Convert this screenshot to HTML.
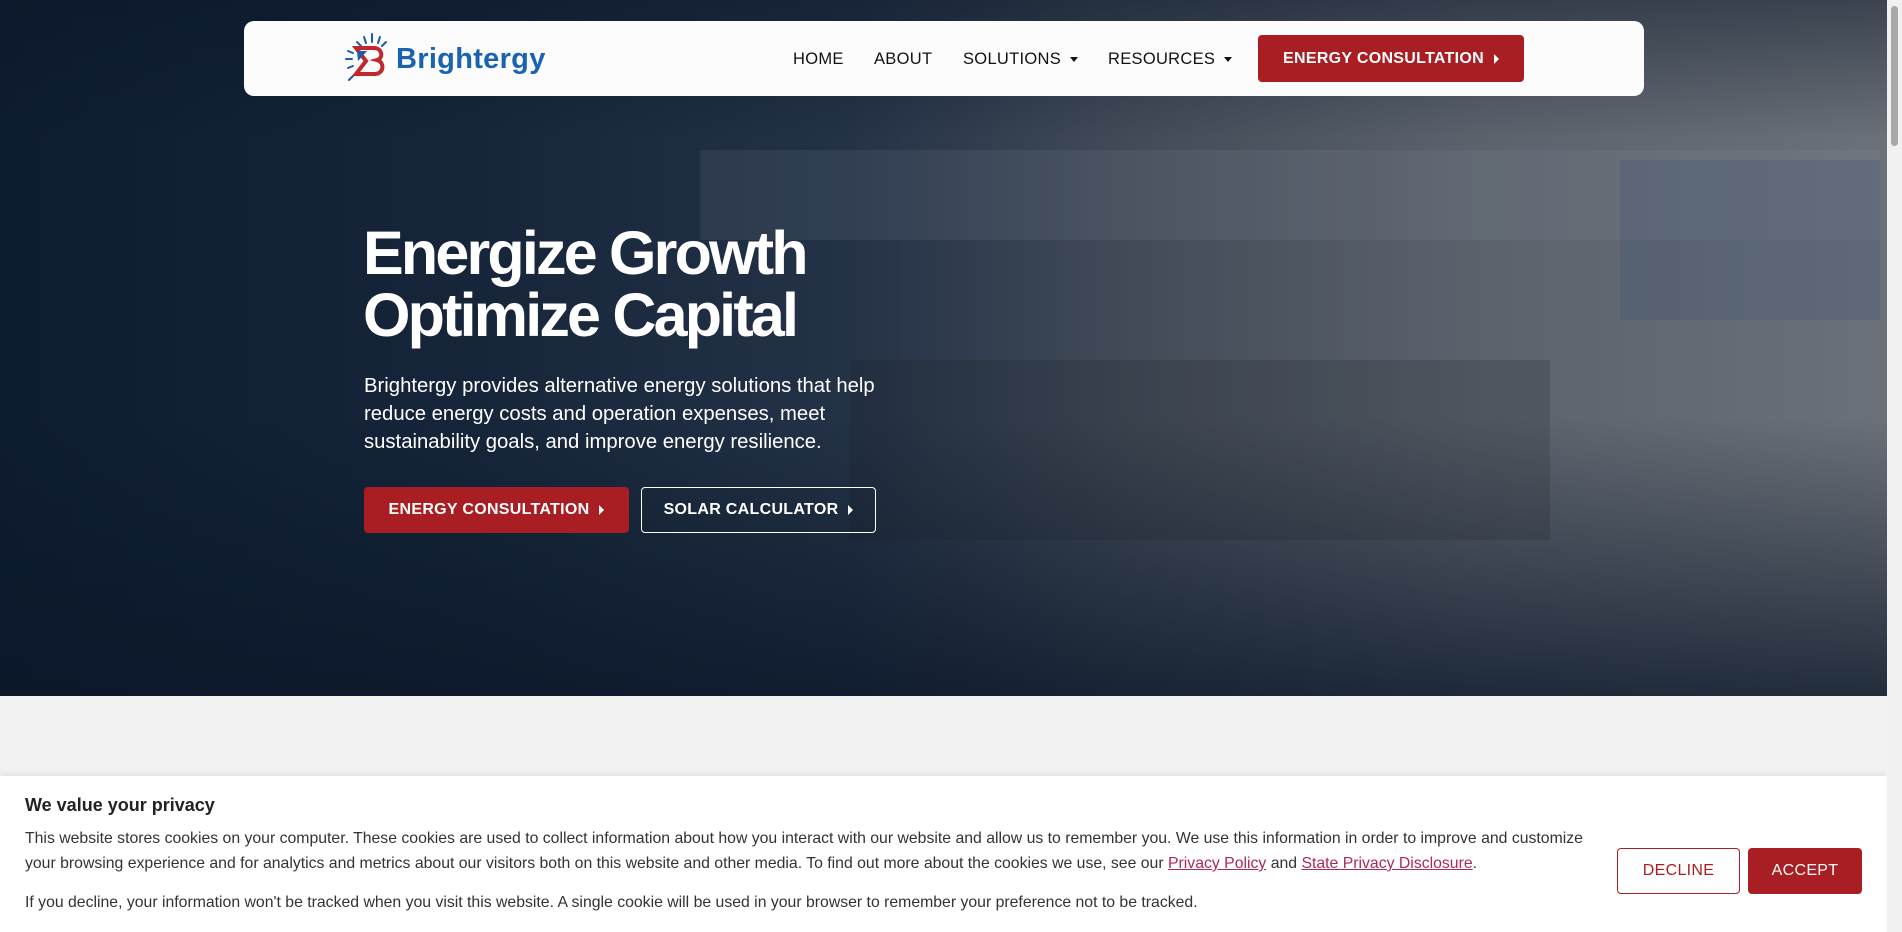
<!DOCTYPE html>
<html><head><meta charset="utf-8"><style>
*{margin:0;padding:0;box-sizing:border-box}
html,body{width:1902px;height:932px;overflow:hidden;font-family:"Liberation Sans",sans-serif;background:#f2f2f2}
.hero{position:absolute;left:0;top:0;width:1887px;height:696px;
background:
linear-gradient(180deg,rgba(10,22,40,0.5) 0%,rgba(10,22,40,0) 20%,rgba(10,22,40,0) 60%,rgba(10,22,40,0.75) 100%),
linear-gradient(90deg,#0e1c30 0%,#16253a 25%,#243247 45%,#424b58 60%,#5b626c 78%,#6b7178 100%);}
.roof{position:absolute}
.scroll{position:absolute;left:1887px;top:0;width:15px;height:932px;background:#f1f1f1}
.scroll div{position:absolute;left:4px;top:6px;width:7px;height:140px;background:#a8a8a8;border-radius:4px}
.nav{position:absolute;left:244px;top:21px;width:1400px;height:75px;background:#fcfcfc;border-radius:10px}
.nav a{position:absolute;top:29px;font-size:16.5px;color:#111;font-weight:500;letter-spacing:.3px}
.btn{position:absolute;background:#a91e23;color:#fff;font-weight:bold;display:flex;align-items:center;justify-content:center;border-radius:4px;letter-spacing:.3px}
.tri{display:inline-block;width:0;height:0;border-left:5px solid currentColor;border-top:5px solid transparent;border-bottom:5px solid transparent;margin-left:10px}
.dn{display:inline-block;width:0;height:0;border-top:5px solid #111;border-left:4.5px solid transparent;border-right:4.5px solid transparent;margin-left:9px;vertical-align:middle}
h1{position:absolute;left:363px;top:222px;color:#fff;font-size:61px;line-height:62px;letter-spacing:-2.8px;font-weight:bold}
.p{position:absolute;left:364px;top:372px;color:#fff;font-size:20.3px;line-height:28px;white-space:nowrap}
.cookie{position:absolute;left:0;top:776px;width:1887px;height:156px;background:#fff;box-shadow:0 -2px 6px rgba(0,0,0,.08)}
.cookie h2{position:absolute;left:25px;top:19px;font-size:18px;color:#222}
.cookie .t{position:absolute;left:25px;font-size:15.8px;color:#333;white-space:nowrap}
.cookie u{color:#b0285a}
</style></head><body>
<div class="hero">
<div class="roof" style="left:700px;top:150px;width:1180px;height:90px;background:rgba(150,160,170,0.12)"></div>
<div class="roof" style="left:1620px;top:160px;width:260px;height:160px;background:rgba(60,80,120,0.25)"></div>
<div class="roof" style="left:850px;top:360px;width:700px;height:180px;background:rgba(20,25,35,0.18)"></div>
</div>
<div class="nav">
<svg style="position:absolute;left:98px;top:10px" width="54" height="56" viewBox="0 0 54 56">
<g stroke="#1a5ea8" stroke-width="2" stroke-linecap="round">
<line x1="30" y1="3" x2="30" y2="11"/><line x1="22" y1="6" x2="24" y2="12"/><line x1="38" y1="6" x2="36" y2="12"/><line x1="15" y1="11" x2="19" y2="15"/><line x1="44" y1="11" x2="40" y2="15"/><line x1="4" y1="28" x2="10" y2="28"/><line x1="6" y1="20" x2="11" y2="22"/><line x1="6" y1="37" x2="11" y2="35"/><line x1="7" y1="49" x2="13" y2="43"/></g>
<path d="M14 17h18c8 0 10 10 3 12 8 2 7 14-2 14H14l10-13z" fill="none" stroke="#c1272d" stroke-width="4"/>
<path d="M15 20h10l-9 10z" fill="#1a5ea8"/>
</svg>
<div style="position:absolute;left:152px;top:22px;font-size:29px;color:#1a63b0;font-weight:bold;letter-spacing:.3px">Brightergy</div>
<a style="left:549px">HOME</a>
<a style="left:630px">ABOUT</a>
<a style="left:719px">SOLUTIONS<span class="dn"></span></a>
<a style="left:864px">RESOURCES<span class="dn"></span></a>
<div class="btn" style="left:1014px;top:14px;width:266px;height:47px;font-size:16px">ENERGY CONSULTATION<span class="tri"></span></div>
</div>
<h1>Energize Growth<br>Optimize Capital</h1>
<div class="p">Brightergy provides alternative energy solutions that help<br>reduce energy costs and operation expenses, meet<br>sustainability goals, and improve energy resilience.</div>
<div class="btn" style="left:364px;top:487px;width:265px;height:46px;font-size:16px">ENERGY CONSULTATION<span class="tri"></span></div>
<div class="btn" style="left:641px;top:487px;width:235px;height:46px;font-size:16px;background:transparent;border:1.5px solid #fff">SOLAR CALCULATOR<span class="tri"></span></div>
<div class="cookie">
<h2>We value your privacy</h2>
<div class="t" style="top:54px">This website stores cookies on your computer. These cookies are used to collect information about how you interact with our website and allow us to remember you. We use this information in order to improve and customize</div>
<div class="t" style="top:79px">your browsing experience and for analytics and metrics about our visitors both on this website and other media. To find out more about the cookies we use, see our <u>Privacy Policy</u> and <u>State Privacy Disclosure</u>.</div>
<div class="t" style="top:118px">If you decline, your information won't be tracked when you visit this website. A single cookie will be used in your browser to remember your preference not to be tracked.</div>
<div class="btn" style="left:1617px;top:72px;width:123px;height:46px;font-size:16px;background:#fff;color:#a91e23;border:1px solid #a91e23;font-weight:500">DECLINE</div>
<div class="btn" style="left:1748px;top:72px;width:114px;height:46px;font-size:16px;font-weight:500">ACCEPT</div>
</div>
<div class="scroll"><div></div></div>
</body></html>
